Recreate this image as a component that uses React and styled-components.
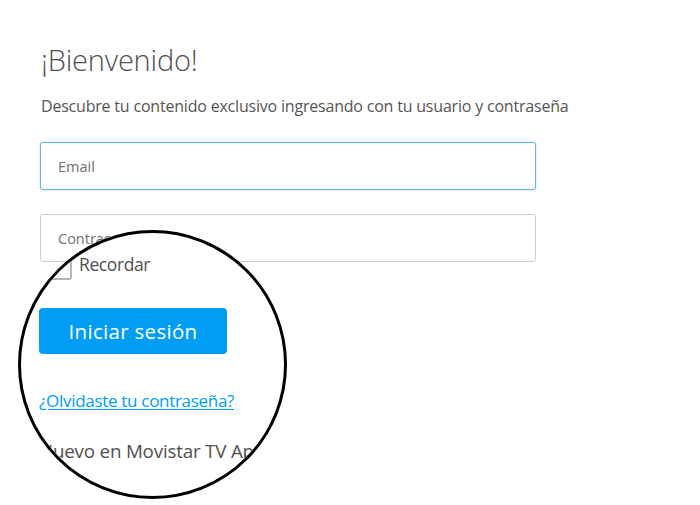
import React from "react";
import styled, { createGlobalStyle } from "styled-components";

const Global = createGlobalStyle`
  html, body { margin: 0; padding: 0; background: #ffffff; }
  body { font-family: "Open Sans", "Noto Sans", sans-serif; color: #505050; }
  * { box-sizing: border-box; }
`;

const Page = styled.div`
  position: relative;
  width: 700px;
  height: 505px;
  overflow: hidden;
  padding: 40px 0 0 40px;
`;

const Title = styled.h1`
  margin: 0 0 0 1px;
  font-size: 29px;
  font-weight: 300;
  line-height: 40px;
  color: #4f4f4f;
  letter-spacing: -0.2px;
`;

const Subtitle = styled.p`
  margin: 15px 0 0 1px;
  font-size: 16px;
  font-weight: 400;
  line-height: 23px;
  color: #555;
  letter-spacing: -0.2px;
`;

const Field = styled.div`
  width: 496px;
  height: 48px;
  margin-top: ${(p) => p.$gap}px;
  border: 1px solid ${(p) => (p.$focused ? "#5bb8e6" : "#cccccc")};
  border-radius: 3px;
  display: flex;
  align-items: center;
  padding-left: 17px;
  font-size: 14.5px;
  color: #6f6f6f;
  background: #fff;
  box-shadow: ${(p) => (p.$focused ? "0 0 2px rgba(91,184,230,0.5)" : "none")};
`;

const Lens = styled.div`
  position: absolute;
  left: 18px;
  top: 230px;
  width: 269px;
  height: 269px;
  border-radius: 50%;
  border: 3px solid #000;
  background: #fff;
  overflow: hidden;
`;

const LensContent = styled.div`
  display: flex;
  flex-direction: column;
  align-items: flex-start;
  padding: 20px 0 0 18px;
  width: 600px;
`;

const CheckRow = styled.div`
  display: flex;
  align-items: center;
  gap: 9px;
  margin-left: 8px;
  height: 26px;
`;

const Box = styled.span`
  width: 25px;
  height: 27px;
  border: 2px solid #b5b5b5;
  border-radius: 3px;
  background: #fff;
`;

const CheckLabel = styled.span`
  font-size: 17.5px;
  color: #505050;
  letter-spacing: -0.4px;
  margin-left: -2px;
  margin-top: -4px;
`;

const Button = styled.button`
  margin-top: 29px;
  width: 188px;
  height: 46px;
  border: none;
  border-radius: 4px;
  background: #019df4;
  color: #fff;
  font-family: inherit;
  font-size: 20.5px;
  font-weight: 400;
  letter-spacing: 0.3px;
  cursor: pointer;
`;

const Link = styled.a`
  margin-top: 36px;
  font-size: 17px;
  color: #019df4;
  text-decoration: underline;
  text-underline-offset: 2px;
  letter-spacing: -0.3px;
  line-height: 22px;
`;

const Foot = styled.p`
  margin: 26px 0 0 0;
  font-size: 18.8px;
  color: #505050;
  letter-spacing: -0.2px;
  line-height: 26px;
`;

export default function App() {
  return (
    <>
      <Global />
      <Page>
        <Title>¡Bienvenido!</Title>
        <Subtitle>Descubre tu contenido exclusivo ingresando con tu usuario y contraseña</Subtitle>
        <Field $focused $gap={24}>Email</Field>
        <Field $gap={24}>Contraseña</Field>
        <Lens>
          <LensContent>
            <CheckRow>
              <Box />
              <CheckLabel>Recordar</CheckLabel>
            </CheckRow>
            <Button>Iniciar sesión</Button>
            <Link href="#">¿Olvidaste tu contraseña?</Link>
            <Foot>Nuevo en Movistar TV App</Foot>
          </LensContent>
        </Lens>
      </Page>
    </>
  );
}
